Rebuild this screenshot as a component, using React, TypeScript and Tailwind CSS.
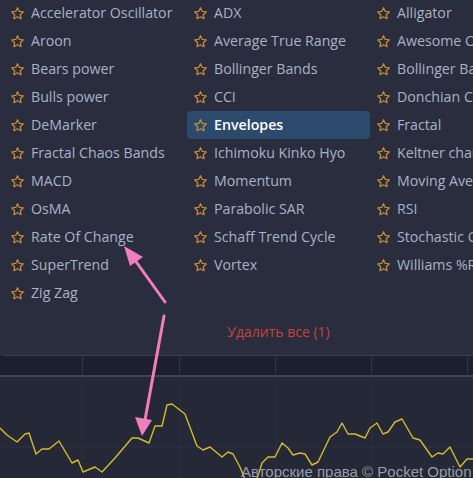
import React from "react";

const col1 = ["Accelerator Oscillator","Aroon","Bears power","Bulls power","DeMarker","Fractal Chaos Bands","MACD","OsMA","Rate Of Change","SuperTrend","Zig Zag"];
const col2 = ["ADX","Average True Range","Bollinger Bands","CCI","Envelopes","Ichimoku Kinko Hyo","Momentum","Parabolic SAR","Schaff Trend Cycle","Vortex"];
const col3 = ["Alligator","Awesome Oscillator","Bollinger Bands Width","Donchian Channels","Fractal","Keltner channel","Moving Average","RSI","Stochastic Oscillator","Williams %R"];

function StarIcon() {
  return (
    <svg width="15" height="15" viewBox="0 0 24 24" fill="none" stroke="#c98a35" strokeWidth="2" strokeLinejoin="round" className="shrink-0">
      <path d="M12 2.8l2.8 5.9 6.4.8-4.7 4.4 1.2 6.4L12 17.2l-5.7 3.1 1.2-6.4-4.7-4.4 6.4-.8z" />
    </svg>
  );
}

function Item({ name, active }: { name: string; active?: boolean }) {
  return (
    <div className={"flex h-[28px] items-center gap-[6px] rounded-[4px] pl-[6px] whitespace-nowrap " + (active ? "bg-[#2c4a6c] text-white font-semibold" : "text-[#a9b3c6]")}>
      <StarIcon />
      <span className="text-[14.2px] leading-none">{name}</span>
    </div>
  );
}

const pts1 = "0,428 7,435 17,442 25,434 29,433 36,454 42,449 49,449 59,441 72,463 78,460 83,472 95,467 102,472 115,458 132,438 138,438 149,443 155,426 162,426 167,405 172,404 185,414 197,446 203,450 210,447 222,457 228,452 233,454 240,467 246,482 256,482 262,463 268,457 275,457 282,443 288,448 293,455 300,453 305,454 312,465 318,462 330,437 337,432 342,423 348,434 355,434 365,438 370,428 377,423 383,434 388,432 395,422 402,419 413,438 420,440 432,457 438,453 443,454 450,447 460,467 467,459 473,459";

export default function App() {
  return (
    <div className="relative w-[473px] h-[478px] overflow-hidden bg-[#252836]" style={{ fontFamily: '"Open Sans", "Noto Sans", sans-serif' }}>
      {/* panel */}
      <div className="relative z-10 h-[356px] bg-[#292d3d] border-b border-[#3a4152] rounded-bl-[5px] flex flex-col">
        <div className="flex -mt-px pl-[4px]">
          <div className="w-[183px] shrink-0 flex flex-col">
            {col1.map((n) => <Item key={n} name={n} />)}
          </div>
          <div className="w-[183px] shrink-0 flex flex-col">
            {col2.map((n) => <Item key={n} name={n} active={n === "Envelopes"} />)}
          </div>
          <div className="w-[183px] shrink-0 flex flex-col">
            {col3.map((n) => <Item key={n} name={n} />)}
          </div>
        </div>
        <div className="flex justify-center pl-[84px] mt-[14px]">
          <span className="text-[14px] text-[#c8433d]">Удалить все (1)</span>
        </div>
      </div>
      {/* dark band */}
      <div className="h-[21px] bg-[#1d1f2d] border-b-2 border-[#3b4657] flex">
        <div className="w-[83px] border-r border-[#30374a]" />
        <div className="w-[97px] border-r border-[#30374a]" />
        <div className="w-[96px] border-r border-[#30374a]" />
        <div className="w-[96px] border-r border-[#30374a]" />
        <div className="w-[96px] border-r border-[#30374a]" />
      </div>
      {/* chart */}
      <svg className="absolute left-0 top-0" width="473" height="478" viewBox="0 0 473 478">
        <line x1="0" y1="447" x2="473" y2="447" stroke="#2d3142" strokeWidth="1" />
        <line x1="83" y1="379" x2="83" y2="478" stroke="#2a2e3e" strokeWidth="1" />
        <line x1="180" y1="379" x2="180" y2="478" stroke="#2a2e3e" strokeWidth="1" />
        <line x1="276" y1="379" x2="276" y2="478" stroke="#2a2e3e" strokeWidth="1" />
        <line x1="372" y1="379" x2="372" y2="478" stroke="#2a2e3e" strokeWidth="1" />
        <polyline points={pts1} fill="none" stroke="#d6bb2c" strokeWidth="1.4" strokeLinejoin="round" />
      </svg>
      <div className="absolute left-[241px] top-[461px] text-[15px] text-[#9a9ca6] whitespace-nowrap" style={{ fontFamily: '"Liberation Sans", Arial, sans-serif' }}>
        Авторские права © Pocket Option
      </div>
      {/* pink arrows */}
      <svg className="absolute left-0 top-0 z-20 pointer-events-none" width="473" height="478" viewBox="0 0 473 478">
        <line x1="165" y1="302" x2="132" y2="256" stroke="#f27fbd" strokeWidth="3" strokeLinecap="round" />
        <polygon points="124,246 143,257 130,266" fill="#f27fbd" />
        <line x1="164" y1="316" x2="145" y2="420" stroke="#f27fbd" strokeWidth="3" strokeLinecap="round" />
        <polygon points="142,436 135,417 152,420" fill="#f27fbd" />
      </svg>
    </div>
  );
}
